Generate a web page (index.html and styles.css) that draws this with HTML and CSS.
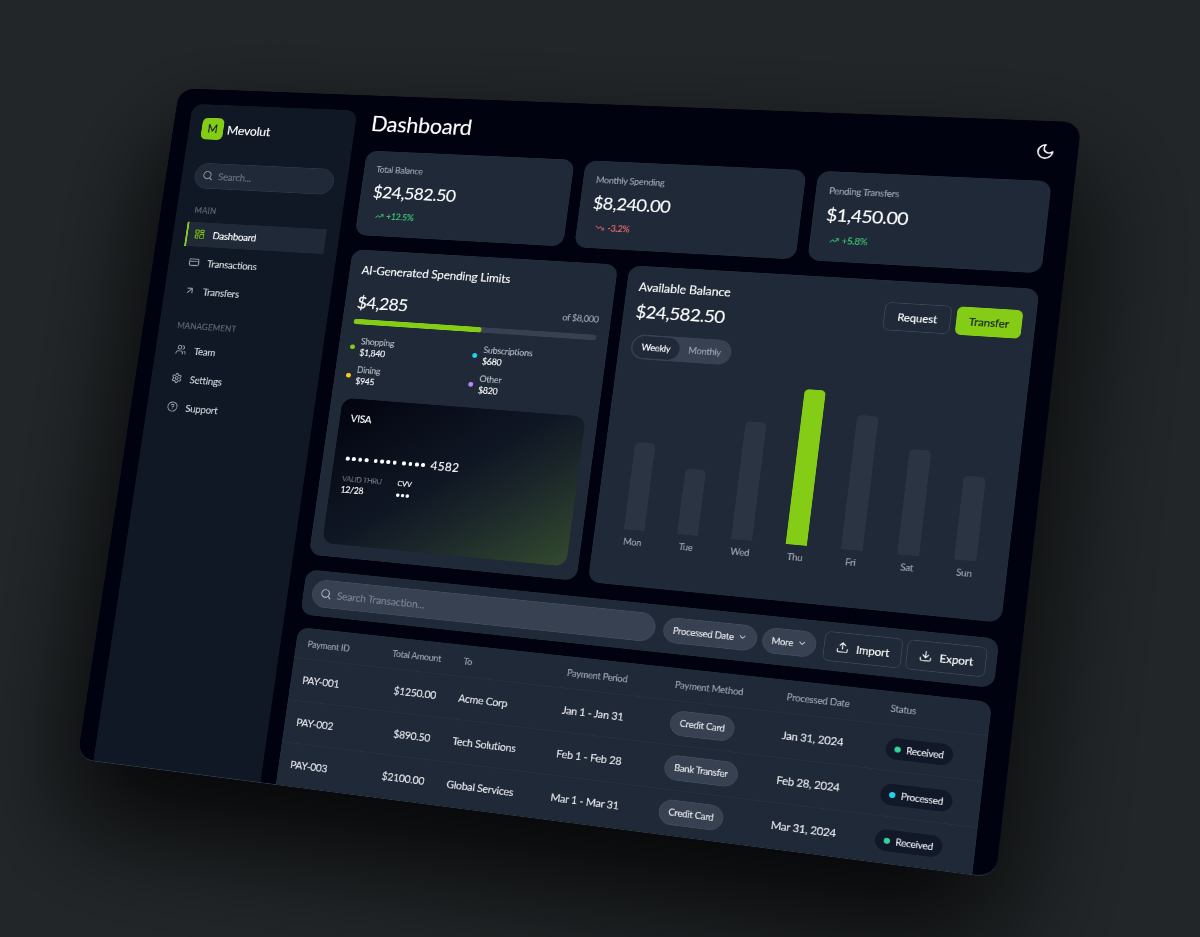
FILE: index.html
```html
<!DOCTYPE html>
<html lang="en">
<head>
    <meta charset="UTF-8">
    <meta name="viewport" content="width=device-width, initial-scale=1.0">
    <title>Mevolut Dashboard</title>
    <link rel="stylesheet" href="styles.css">
</head>
<body>
    <div class="scene">
    <div class="panel">
        <aside class="sidebar">
            <div class="brand"><span class="logo">M</span>Mevolut</div>
            <div class="side-search">
                <svg class="icon" viewBox="0 0 24 24"><circle cx="11" cy="11" r="8"/><path d="m21 21-4.3-4.3"/></svg>
                <span>Search...</span>
            </div>
            <p class="nav-label">Main</p>
            <nav>
                <a class="active">
                    <svg class="icon" viewBox="0 0 24 24"><rect x="3" y="3" width="7" height="7" rx="1"/><rect x="14" y="3" width="7" height="5" rx="1"/><rect x="13" y="12" width="8" height="9" rx="1"/><rect x="3" y="14" width="6" height="7" rx="1"/></svg>
                    Dashboard
                </a>
                <a>
                    <svg class="icon" viewBox="0 0 24 24"><rect x="2" y="5" width="20" height="14" rx="2"/><path d="M2 10h20"/></svg>
                    Transactions
                </a>
                <a>
                    <svg class="icon" viewBox="0 0 24 24"><path d="M7 7h10v10M7 17 17 7"/></svg>
                    Transfers
                </a>
            </nav>
            <p class="nav-label">Management</p>
            <nav>
                <a>
                    <svg class="icon" viewBox="0 0 24 24"><path d="M16 21v-2a4 4 0 0 0-4-4H6a4 4 0 0 0-4 4v2"/><circle cx="9" cy="7" r="4"/><path d="M22 21v-2a4 4 0 0 0-3-3.87M16 3.13a4 4 0 0 1 0 7.75"/></svg>
                    Team
                </a>
                <a>
                    <svg class="icon" viewBox="0 0 24 24"><path d="M12.22 2h-.44a2 2 0 0 0-2 2v.18a2 2 0 0 1-1 1.73l-.43.25a2 2 0 0 1-2 0l-.15-.08a2 2 0 0 0-2.73.73l-.22.38a2 2 0 0 0 .73 2.73l.15.1a2 2 0 0 1 1 1.72v.51a2 2 0 0 1-1 1.74l-.15.09a2 2 0 0 0-.73 2.73l.22.38a2 2 0 0 0 2.73.73l.15-.08a2 2 0 0 1 2 0l.43.25a2 2 0 0 1 1 1.73V20a2 2 0 0 0 2 2h.44a2 2 0 0 0 2-2v-.18a2 2 0 0 1 1-1.73l.43-.25a2 2 0 0 1 2 0l.15.08a2 2 0 0 0 2.73-.73l.22-.39a2 2 0 0 0-.73-2.73l-.15-.08a2 2 0 0 1-1-1.74v-.5a2 2 0 0 1 1-1.74l.15-.09a2 2 0 0 0 .73-2.73l-.22-.38a2 2 0 0 0-2.73-.73l-.15.08a2 2 0 0 1-2 0l-.43-.25a2 2 0 0 1-1-1.73V4a2 2 0 0 0-2-2z"/><circle cx="12" cy="12" r="3"/></svg>
                    Settings
                </a>
                <a>
                    <svg class="icon" viewBox="0 0 24 24"><circle cx="12" cy="12" r="10"/><path d="M9.09 9a3 3 0 0 1 5.83 1c0 2-3 3-3 3M12 17h.01"/></svg>
                    Support
                </a>
            </nav>
        </aside>

        <main>
            <header>
                <h1>Dashboard</h1>
                <svg class="icon moon" viewBox="0 0 24 24"><path d="M12 3a6 6 0 0 0 9 9 9 9 0 1 1-9-9Z"/></svg>
            </header>

            <section class="stats">
                <div class="card stat">
                    <p class="label">Total Balance</p>
                    <p class="amount">$24,582.50</p>
                    <p class="change up"><svg class="icon" viewBox="0 0 24 24"><path d="m22 7-8.5 8.5-5-5L2 17"/><path d="M16 7h6v6"/></svg>+12.5%</p>
                </div>
                <div class="card stat">
                    <p class="label">Monthly Spending</p>
                    <p class="amount">$8,240.00</p>
                    <p class="change down"><svg class="icon" viewBox="0 0 24 24"><path d="m22 17-8.5-8.5-5 5L2 7"/><path d="M16 17h6v-6"/></svg>-3.2%</p>
                </div>
                <div class="card stat">
                    <p class="label">Pending Transfers</p>
                    <p class="amount">$1,450.00</p>
                    <p class="change up"><svg class="icon" viewBox="0 0 24 24"><path d="m22 7-8.5 8.5-5-5L2 17"/><path d="M16 7h6v6"/></svg>+5.8%</p>
                </div>
            </section>

            <section class="middle">
                <div class="card limits">
                    <h2>AI-Generated Spending Limits</h2>
                    <div class="limit-row">
                        <span class="amount">$4,285</span>
                        <span class="label">of $8,000</span>
                    </div>
                    <div class="progress"><div class="fill" style="width: 53.5%"></div></div>
                    <ul class="categories">
                        <li><i class="dot lime"></i><div><span>Shopping</span><b>$1,840</b></div></li>
                        <li><i class="dot cyan"></i><div><span>Subscriptions</span><b>$680</b></div></li>
                        <li><i class="dot yellow"></i><div><span>Dining</span><b>$945</b></div></li>
                        <li><i class="dot purple"></i><div><span>Other</span><b>$820</b></div></li>
                    </ul>
                    <div class="bank-card">
                        <p class="brand-name">VISA</p>
                        <p class="number"><span class="mask"><i></i><i></i><i></i><i></i></span><span class="mask"><i></i><i></i><i></i><i></i></span><span class="mask"><i></i><i></i><i></i><i></i></span>4582</p>
                        <div class="details">
                            <div><span class="faint">VALID THRU</span><b>12/28</b></div>
                            <div><span>CVV</span><b class="mask small"><i></i><i></i><i></i></b></div>
                        </div>
                    </div>
                </div>

                <div class="card balance">
                    <div class="balance-head">
                        <div>
                            <h2>Available Balance</h2>
                            <p class="amount">$24,582.50</p>
                        </div>
                        <div class="actions">
                            <button class="btn">Request</button>
                            <button class="btn primary">Transfer</button>
                        </div>
                    </div>
                    <div class="toggle"><span class="on">Weekly</span><span>Monthly</span></div>
                    <div class="chart">
                        <div class="day"><div class="bar" style="height: 126px"></div>Mon</div>
                        <div class="day"><div class="bar" style="height: 94px"></div>Tue</div>
                        <div class="day"><div class="bar" style="height: 168px"></div>Wed</div>
                        <div class="day"><div class="bar today" style="height: 220px"></div>Thu</div>
                        <div class="day"><div class="bar" style="height: 189px"></div>Fri</div>
                        <div class="day"><div class="bar" style="height: 147px"></div>Sat</div>
                        <div class="day"><div class="bar" style="height: 116px"></div>Sun</div>
                    </div>
                </div>
            </section>

            <section class="card toolbar">
                <div class="search">
                    <svg class="icon" viewBox="0 0 24 24"><circle cx="11" cy="11" r="8"/><path d="m21 21-4.3-4.3"/></svg>
                    <span>Search Transaction...</span>
                </div>
                <div class="filter wide">Processed Date <svg class="icon" viewBox="0 0 24 24"><path d="m6 9 6 6 6-6"/></svg></div>
                <div class="filter">More <svg class="icon" viewBox="0 0 24 24"><path d="m6 9 6 6 6-6"/></svg></div>
                <button class="btn file import"><svg class="icon" viewBox="0 0 24 24"><path d="M21 15v4a2 2 0 0 1-2 2H5a2 2 0 0 1-2-2v-4M17 8l-5-5-5 5M12 3v12"/></svg>Import</button>
                <button class="btn file"><svg class="icon" viewBox="0 0 24 24"><path d="M21 15v4a2 2 0 0 1-2 2H5a2 2 0 0 1-2-2v-4M7 10l5 5 5-5M12 15V3"/></svg>Export</button>
            </section>

            <section class="card payments">
                <table>
                    <colgroup><col class="c-id"><col class="c-amount"><col class="c-to"><col class="c-period"><col class="c-method"><col class="c-date"><col></colgroup>
                    <thead>
                        <tr><th>Payment ID</th><th class="right">Total Amount</th><th>To</th><th>Payment Period</th><th>Payment Method</th><th>Processed Date</th><th>Status</th></tr>
                    </thead>
                    <tbody>
                        <tr><td>PAY-001</td><td class="right">$1250.00</td><td>Acme Corp</td><td>Jan 1 - Jan 31</td><td><span class="method">Credit Card</span></td><td>Jan 31, 2024</td><td><span class="status"><i class="dot green"></i>Received</span></td></tr>
                        <tr><td>PAY-002</td><td class="right">$890.50</td><td>Tech Solutions</td><td>Feb 1 - Feb 28</td><td><span class="method">Bank Transfer</span></td><td>Feb 28, 2024</td><td><span class="status"><i class="dot cyan"></i>Processed</span></td></tr>
                        <tr><td>PAY-003</td><td class="right">$2100.00</td><td>Global Services</td><td>Mar 1 - Mar 31</td><td><span class="method">Credit Card</span></td><td>Mar 31, 2024</td><td><span class="status"><i class="dot green"></i>Received</span></td></tr>
                    </tbody>
                </table>
            </section>
        </main>
    </div>
    </div>
</body>
</html>
```
FILE: styles.css
```css
* {
    box-sizing: border-box;
    margin: 0;
    padding: 0;
}

body {
    background: #222628;
    font-family: Lato, "Open Sans", sans-serif;
    font-size: 14.8px;
    letter-spacing: -0.022em;
    -webkit-text-stroke: 0.2px;
    color: #fff;
}

.scene {
    width: 100%;
    height: 100vh;
    overflow: hidden;
}

/* the whole app is drawn flat at 1280x1040 and tilted in space */
.panel {
    display: flex;
    width: 1280px;
    height: 1040px;
    padding: 24px 29px 0 25px;
    overflow: hidden;
    background: #00020f;
    border-bottom: 1px solid #303b48;
    border-radius: 24px;
    transform-origin: 0 0;
    transform: matrix3d(0.613617, 0.016258, 0, -0.00008435, -0.100135, 0.625019, 0, -0.00002657, 0, 0, 1, 0, 179.3, 88.2, 0, 1);
    box-shadow: 0 80px 160px 10px rgba(0, 0, 0, 0.85);
}

.icon {
    width: 17px;
    height: 17px;
    flex: none;
    fill: none;
    stroke: currentColor;
    stroke-width: 2;
    stroke-linecap: round;
    stroke-linejoin: round;
}

/* sidebar */
.sidebar {
    flex: none;
    width: 255px;
    height: 1016px;
    margin-right: 23px;
    padding: 21px 20px 0;
    background: #101825;
    border-radius: 16px 16px 0 0;
}

.brand {
    display: flex;
    align-items: center;
    gap: 6px;
    height: 34px;
    margin-bottom: 37px;
    font-size: 19px;
}

.logo {
    width: 34px;
    height: 34px;
    border-radius: 8px;
    background: #84cc16;
    color: #111827;
    font-size: 17px;
    line-height: 34px;
    text-align: center;
}

.side-search {
    display: flex;
    align-items: center;
    gap: 8px;
    height: 40px;
    padding: 0 0 1px 11px;
    margin-bottom: 27px;
    border: 1px solid #2c3747;
    border-radius: 20px;
    background: #1f2937;
    color: #6b7280;
}

.side-search .icon {
    color: #9ca3af;
}

.nav-label {
    margin-bottom: 10px;
    padding-left: 8px;
    font-size: 12.5px;
    line-height: 16px;
    letter-spacing: 0.015em;
    text-transform: uppercase;
    color: #5f6877;
}

nav {
    display: flex;
    flex-direction: column;
    gap: 6px;
    margin-bottom: 28px;
}

nav a {
    display: flex;
    align-items: center;
    gap: 12px;
    height: 38px;
    padding: 0 0 1px 11px;
    color: #d1d5db;
}

nav .icon {
    color: #9ca3af;
}

nav .active {
    padding-left: 10px;
    border-left: 3px solid #84cc16;
    background: #1f2937;
    color: #fff;
}

nav .active .icon {
    color: #84cc16;
}

/* main column */
main {
    flex: none;
    width: 948px;
}

header {
    display: flex;
    align-items: center;
    justify-content: space-between;
    height: 38px;
    margin-bottom: 23px;
}

h1 {
    padding-left: 1px;
    font-size: 32px;
    font-weight: 400;
    line-height: 38px;
    letter-spacing: -0.01em;
}

.moon {
    width: 25px;
    height: 25px;
}

h2 {
    font-size: 17px;
    font-weight: 400;
    line-height: 24px;
    letter-spacing: -0.01em;
}

.card {
    border-radius: 16px;
    background: #1f2937;
    border: 1px solid #222d3b;
}

.label {
    font-size: 12.7px;
    color: #9ca3af;
}

.amount {
    font-size: 25.5px;
    font-weight: 400;
    line-height: 32px;
    letter-spacing: -0.03em;
}

.stats {
    display: grid;
    grid-template-columns: repeat(3, 1fr);
    gap: 16px;
    margin-bottom: 22px;
}

.stat {
    height: 130px;
    padding: 19px 16px 0 17px;
}

.stat .label {
    line-height: 16px;
    margin-bottom: 10px;
}

.change {
    display: flex;
    align-items: center;
    gap: 4px;
    margin-top: 11px;
    padding-left: 8px;
    font-size: 12.7px;
    line-height: 20px;
}

.change .icon {
    width: 13px;
    height: 13px;
}

.up {
    color: #3fca78;
}

.down {
    color: #e66b6e;
}

.middle {
    display: grid;
    grid-template-columns: 386px 546px;
    gap: 16px;
    height: 462px;
    margin-bottom: 22px;
}

/* spending limits */
.limits {
    padding: 18px 16px 0;
}

.limits h2 {
    padding-left: 1px;
}

.limit-row {
    display: flex;
    align-items: center;
    justify-content: space-between;
    margin-top: 20px;
    padding-left: 1px;
}

.limit-row .label {
    padding-top: 5px;
}

.progress {
    height: 8px;
    margin-top: 10px;
    border-radius: 4px;
    background: #374151;
}

.fill {
    height: 8px;
    border-radius: 4px;
    background: #84cc16;
}

.categories {
    display: grid;
    grid-template-columns: 1fr 1fr;
    gap: 9px 8px;
    margin-top: 17px;
    list-style: none;
    font-size: 12.7px;
    line-height: 17px;
}

.categories li {
    display: flex;
    align-items: center;
    gap: 8px;
}

.categories span,
.categories b {
    display: block;
    font-weight: 400;
}

.categories span {
    color: #b4bac4;
}

.dot {
    width: 8px;
    height: 8px;
    flex: none;
    border-radius: 50%;
}

.categories .dot {
    width: 7px;
    height: 7px;
}

.lime { background: #84cc16; }
.cyan { background: #22d3ee; }
.yellow { background: #facc15; }
.purple { background: #c084fc; }
.green { background: #34d399; }

.bank-card {
    height: 218px;
    margin-top: 18px;
    padding: 18px 16px;
    border-radius: 16px;
    background: linear-gradient(144deg, #02040f 0%, #101724 48%, #1a2529 65%, #334a2f 100%);
}

.brand-name {
    line-height: 22px;
}

.number {
    display: flex;
    align-items: center;
    gap: 8px;
    margin-top: 40px;
    padding-left: 1px;
    font-size: 17px;
    line-height: 20px;
    letter-spacing: 0.03em;
}

.mask {
    display: flex;
    align-items: center;
    gap: 3.5px;
}

.mask i {
    width: 5.8px;
    height: 5.8px;
    border-radius: 50%;
    background: #fff;
}

.mask.small {
    gap: 2px;
    height: 19px;
}

.mask.small i {
    width: 5px;
    height: 5px;
}

.details {
    display: flex;
    gap: 23px;
    margin-top: 11px;
    font-size: 12.7px;
    line-height: 17px;
}

.details span {
    display: block;
    font-size: 10.7px;
}

.details b {
    font-weight: 400;
}

.faint {
    color: #6b7280;
}

/* balance chart */
.balance {
    padding: 18px 16px 0;
}

.balance-head {
    display: flex;
    justify-content: space-between;
}

.balance-head .amount {
    margin-top: 7px;
}

.actions {
    display: flex;
    gap: 7px;
    margin-top: 12px;
}

.btn {
    display: flex;
    align-items: center;
    justify-content: center;
    width: 87px;
    height: 40px;
    border: 1px solid #3d4757;
    border-radius: 8px;
    background: none;
    font: 400 14.8px Lato, sans-serif;
    letter-spacing: -0.01em;
    color: #fff;
}

.btn.primary {
    width: 84px;
    border: 0;
    background: #84cc16;
    color: #111827;
}

.toggle {
    display: inline-flex;
    height: 36px;
    width: 138px;
    margin-top: 18px;
    padding: 2px;
    border-radius: 18px;
    background: #374151;
    font-size: 12.7px;
    line-height: 32px;
    text-align: center;
    color: #9ca3af;
}

.toggle span {
    flex: 1;
}

.toggle .on {
    flex: none;
    width: 65px;
    border-radius: 16px;
    background: #1f2937;
    color: #fff;
}

.chart {
    display: flex;
    align-items: flex-end;
    height: 269px;
    margin-top: 2px;
}

.day {
    flex: 1;
    font-size: 12.7px;
    line-height: 16px;
    text-align: center;
    color: #9ca3af;
}

.bar {
    width: 28px;
    margin: 0 auto 9px;
    border-radius: 6px 6px 0 0;
    background: #2b3442;
}

.bar.today {
    background: #84cc16;
}

/* toolbar */
.toolbar {
    display: flex;
    align-items: center;
    height: 67px;
    margin-bottom: 19px;
    padding: 0 12px;
}

.search,
.filter {
    display: flex;
    align-items: center;
    border: 1px solid #434d5d;
    background: #374151;
}

.search {
    width: 489px;
    height: 41px;
    gap: 8px;
    padding-left: 11px;
    border-radius: 21px;
    letter-spacing: -0.012em;
    color: #7b8493;
}

.search .icon {
    color: #b4bac4;
}

.filter {
    justify-content: center;
    gap: 5px;
    width: 71px;
    height: 36px;
    margin-left: 7px;
    border-radius: 18px;
    font-size: 12.7px;
    color: #e5e7eb;
}

.filter.wide {
    width: 126px;
    margin-left: 11px;
}

.filter .icon {
    width: 13px;
    height: 13px;
}

.file {
    width: 101px;
    height: 41px;
    gap: 9px;
    margin-left: 6px;
}

.file.import {
    margin-left: 10px;
}

/* payments table */
.payments {
    height: 233px;
    overflow: hidden;
    border-bottom: 0;
    border-radius: 16px 16px 0 0;
}

table {
    width: 946px;
    table-layout: fixed;
    border-collapse: collapse;
}

.c-id { width: 121px; }
.c-amount { width: 106px; }
.c-to { width: 146px; }
.c-period { width: 148px; }
.c-method { width: 149px; }
.c-date { width: 135px; }

th,
td {
    padding: 0 16px;
    text-align: left;
    font-weight: 400;
    white-space: nowrap;
}

th {
    height: 44px;
    font-size: 12.7px;
    color: #9ca3af;
}

td {
    height: 62px;
    color: #e5e7eb;
    border-top: 1px solid #273240;
}

.right {
    text-align: right;
}

.method,
.status {
    display: inline-flex;
    align-items: center;
    font-size: 12.7px;
}

.method {
    height: 35px;
    padding: 0 12px;
    border: 1px solid #434d5d;
    border-radius: 18px;
    background: #374151;
}

.status {
    height: 29px;
    margin-top: 3px;
    gap: 7px;
    padding: 0 11px;
    border-radius: 15px;
    background: #111827;
}
```
